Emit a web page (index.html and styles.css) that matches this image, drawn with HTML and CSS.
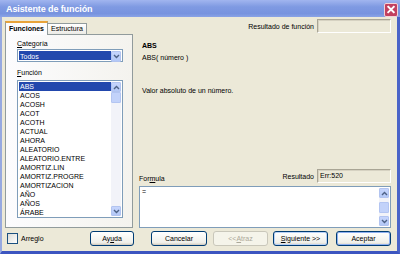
FILE: index.html
```html
<!DOCTYPE html>
<html>
<head>
<meta charset="utf-8">
<link rel="stylesheet" href="styles.css">
</head>
<body>
<div class="window">
  <div class="titlebar">
    <span class="title">Asistente de función</span>
    <span class="close"><svg width="13" height="13" viewBox="0 0 13 13"><path d="M3.5 3.5 L9.5 9.5 M9.5 3.5 L3.5 9.5" stroke="#fff" stroke-width="2" stroke-linecap="square"/></svg></span>
  </div>
  <div class="body">
    <div class="main">
      <div class="left">
        <div class="tabs">
          <div class="tab active">Funciones</div>
          <div class="tab">Estructura</div>
        </div>
        <div class="panel">
          <div class="label"><u>C</u>ategoría</div>
          <div class="select">
            <span class="sel-text">Todos</span>
            <span class="sbtn"><svg width="7" height="5" viewBox="0 0 7 5"><path d="M1 1 L3.5 3.5 L6 1" fill="none" stroke="#4d6185" stroke-width="1.4"/></svg></span>
          </div>
          <div class="label lab2"><u>F</u>unción</div>
          <div class="list">
            <div class="items">
              <div class="item sel">ABS</div>
              <div class="item">ACOS</div>
              <div class="item">ACOSH</div>
              <div class="item">ACOT</div>
              <div class="item">ACOTH</div>
              <div class="item">ACTUAL</div>
              <div class="item">AHORA</div>
              <div class="item">ALEATORIO</div>
              <div class="item">ALEATORIO.ENTRE</div>
              <div class="item">AMORTIZ.LIN</div>
              <div class="item">AMORTIZ.PROGRE</div>
              <div class="item">AMORTIZACION</div>
              <div class="item">AÑO</div>
              <div class="item">AÑOS</div>
              <div class="item">ÁRABE</div>
              <div class="item">ÁREAS</div>
            </div>
            <div class="vscroll">
              <span class="sbtn"><svg width="7" height="5" viewBox="0 0 7 5"><path d="M1 4 L3.5 1.5 L6 4" fill="none" stroke="#4d6185" stroke-width="1.4"/></svg></span>
              <span class="thumb"></span>
              <span class="track"></span>
              <span class="sbtn"><svg width="7" height="5" viewBox="0 0 7 5"><path d="M1 1 L3.5 3.5 L6 1" fill="none" stroke="#4d6185" stroke-width="1.4"/></svg></span>
            </div>
          </div>
        </div>
      </div>
      <div class="right">
        <div class="resrow">
          <span class="rlabel">Resultado de función</span>
          <span class="field"></span>
        </div>
        <div class="fname">ABS</div>
        <div class="fsyn">ABS( número )</div>
        <div class="fdesc">Valor absoluto de un número.</div>
        <div class="frow">
          <span class="flabel">For<u>m</u>ula</span>
          <span class="rlabel">Resultado</span>
          <span class="field">Err:520</span>
        </div>
        <div class="textarea">
          <div class="tacontent">=</div>
          <div class="vscroll">
            <span class="sbtn"><svg width="7" height="5" viewBox="0 0 7 5"><path d="M1 4 L3.5 1.5 L6 4" fill="none" stroke="#4d6185" stroke-width="1.4"/></svg></span>
            <span class="track"></span>
            <span class="thumb"></span>
            <span class="track"></span>
            <span class="sbtn"><svg width="7" height="5" viewBox="0 0 7 5"><path d="M1 1 L3.5 3.5 L6 1" fill="none" stroke="#4d6185" stroke-width="1.4"/></svg></span>
          </div>
        </div>
      </div>
    </div>
    <div class="bottom">
      <label class="check"><span class="box"></span>Arreglo</label>
      <div class="buttons">
        <span class="btn b-ayuda">Ay<u>u</u>da</span>
        <span class="btn b-cancel">Cancelar</span>
        <span class="btn disabled b-atraz">&lt;&lt; <u>A</u>traz</span>
        <span class="btn b-sig"><u>S</u>iguiente &gt;&gt;</span>
        <span class="btn b-acep">Aceptar</span>
      </div>
    </div>
  </div>
</div>
</body>
</html>
```
FILE: styles.css
```css
* { box-sizing: border-box; }
html, body { margin: 0; padding: 0; }
body { width: 400px; height: 254px; overflow: hidden; font-family: "Liberation Sans", Arial, sans-serif; font-size: 7px; color: #000; }
u { text-decoration: underline; text-underline-offset: 1px; }

.window { width: 400px; height: 254px; display: flex; flex-direction: column; background: #ece9d8; border-left: 2px solid #97a9e0; border-right: 3px solid #4a64c8; border-bottom: 3px solid #3c55c0; }
.titlebar { height: 17px; margin: 0 -3px 0 -2px; background: linear-gradient(#a1b5ef, #7f9ae2 40%, #7893df 80%, #8aa3e6); display: flex; align-items: center; justify-content: space-between; padding: 0 2px 0 6px; flex: none; }
.title { color: #fff; font-weight: bold; font-size: 9px; letter-spacing: -0.1px; }
.close { width: 14px; height: 14px; background: #c2405f; border: 1px solid #f3d2d8; border-radius: 2px; display: flex; align-items: center; justify-content: center; margin-top: 2px; }

.body { flex: 1; display: flex; flex-direction: column; padding: 0 6px 0 3px; min-height: 0; }
.main { display: flex; height: 211px; flex: none; }
.left { width: 128px; display: flex; flex-direction: column; }
.tabs { display: flex; align-items: flex-end; height: 17px; padding-top: 4px; flex: none; }
.tab { height: 11px; padding: 0 3px; border: 1px solid #919b9c; border-bottom: none; background: linear-gradient(#fff, #ecebe6); line-height: 10px; margin-left: -1px; }
.tab.active { height: 14px; border-top: 2px solid #e8a33a; background: #fcfcfe; font-weight: bold; line-height: 12px; position: relative; z-index: 1; margin-bottom: -1px; margin-left: 0; padding: 0 3px; }
.panel { flex: 1; min-height: 0; border: 1px solid #919b9c; background: linear-gradient(90deg, #fcfcfe, #f4f3ee); padding: 4px 9px 9px 11px; display: flex; flex-direction: column; }
.label { height: 9px; line-height: 9px; flex: none; }
.lab2 { margin-top: 6px; }
.select { margin-top: 1px; height: 13px; border: 1px solid #7f9db9; background: #fff; display: flex; padding: 1px; flex: none; }
.sel-text { flex: 1; background: #2248ad; color: #fff; line-height: 11px; padding-left: 1px; }
.sbtn { width: 10px; height: 10px; flex: none; background: linear-gradient(#c6d5fd, #b3c8f6); border: 1px solid #b2c4f0; border-radius: 1px; display: flex; align-items: center; justify-content: center; }
.select .sbtn { height: 11px; }
.list { margin-top: 3px; flex: 1; min-height: 0; border: 1px solid #7f9db9; background: #fff; display: flex; padding: 1px; overflow: hidden; }
.items { flex: 1; overflow: hidden; }
.item { height: 9px; line-height: 9px; padding-left: 1px; white-space: nowrap; }
.item.sel { background: #2248ad; color: #fff; }
.vscroll { width: 10px; display: flex; flex-direction: column; background: #f2f3f9; }
.thumb { height: 11px; flex: none; background: #c2d2fa; border: 1px solid #b3c5f2; border-radius: 1px; }
.track { flex: 1; }

.right { flex: 1; display: flex; flex-direction: column; padding-left: 6px; }
.resrow { display: flex; justify-content: flex-end; align-items: center; height: 14px; margin-top: 2px; gap: 3px; }
.field { width: 74px; height: 14px; border: 1px solid #a9a595; border-right-color: #fff; border-bottom-color: #fff; box-shadow: inset 1px 1px 0 #d6d2c2; background: #ece9d8; line-height: 12px; padding-left: 2px; }
.fname { font-weight: bold; margin-top: 8px; padding-left: 3px; height: 9px; line-height: 9px; }
.fsyn { margin-top: 3px; padding-left: 3px; height: 9px; line-height: 9px; }
.fdesc { margin-top: 24px; padding-left: 3px; height: 9px; line-height: 9px; }
.frow { margin-top: auto; display: flex; align-items: center; gap: 3px; height: 14px; }
.flabel { flex: 1; padding-top: 5px; }
.textarea { margin-top: 3px; height: 42px; border: 1px solid #7f9db9; background: #fff; display: flex; padding: 1px; }
.tacontent { flex: 1; line-height: 8px; padding-left: 1px; }

.bottom { flex: 1; display: flex; align-items: center; padding-bottom: 3px; }
.check { display: flex; align-items: center; gap: 3px; width: 85px; flex: none; padding-left: 2px; }
.box { width: 11px; height: 11px; border: 1px solid #1c5180; background: linear-gradient(135deg, #dcdcd7, #fff); }
.buttons { display: flex; flex: 1; }
.btn { flex: none; height: 15px; border: 1px solid #003c74; border-radius: 3px; background: linear-gradient(#fff, #f0f0ea 80%, #d6d0c5); display: flex; align-items: center; justify-content: center; box-shadow: inset 0 -1px 0 #d6d0c5; }
.b-ayuda { width: 44px; }
.b-cancel { width: 56px; margin-left: 17px; }
.b-atraz { width: 55px; margin-left: 6px; }
.b-sig { width: 55px; margin-left: 5px; box-shadow: inset 0 0 0 1px #b9d1f6, inset 0 -1px 0 #d6d0c5; }
.b-acep { width: 55px; margin-left: 8px; box-shadow: inset 0 0 0 1px #8fb0f0; }
.btn.disabled { border-color: #c9c7ba; color: #aca899; background: #f5f4ea; box-shadow: none; }
```
